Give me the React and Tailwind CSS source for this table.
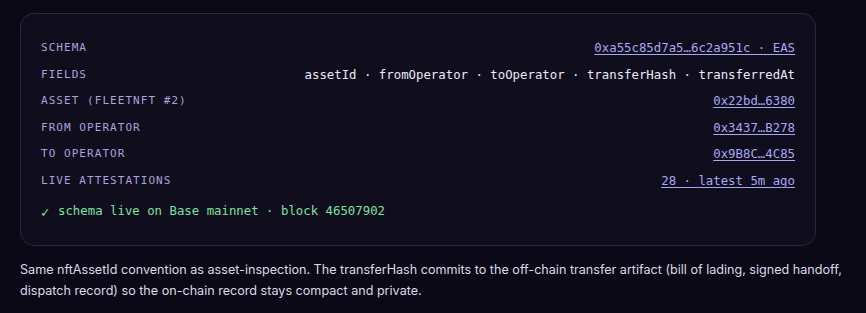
import React from "react";

const rows = [
  { label: "SCHEMA", value: "0xa55c85d7a5…6c2a951c · EAS", link: true },
  {
    label: "FIELDS",
    value: "assetId · fromOperator · toOperator · transferHash · transferredAt",
  },
  { label: "ASSET (FLEETNFT #2)", value: "0x22bd…6380", link: true },
  { label: "FROM OPERATOR", value: "0x3437…B278", link: true },
  { label: "TO OPERATOR", value: "0x9B8C…4C85", link: true },
  { label: "LIVE ATTESTATIONS", value: "28 · latest 5m ago", link: true },
];

const SchemaRow = ({ label, value, link }) => (
  <div className="flex items-center justify-between h-[26.6px] font-['DejaVu_Sans_Mono','Liberation_Mono',monospace]">
    <span className="text-[11px] tracking-[1.05px] text-[#aba3dc]">{label}</span>
    {link ? (
      <a className="text-[12.35px] text-[#a7a8f5] underline underline-offset-2">{value}</a>
    ) : (
      <span className="text-[12.35px] text-[#eceaf5]">{value}</span>
    )}
  </div>
);

export default function App() {
  return (
    <div className="w-[866px] h-[313px] bg-[#0b0915] px-5 pt-[13px]">
      <div className="w-[796px] rounded-[14px] border border-[#2a2740] bg-[#100d1c] px-5 pt-[21px] pb-[20px]">
        {rows.map((r) => (
          <SchemaRow key={r.label} {...r} />
        ))}
        <div className="mt-[4px] h-[26px] flex items-center text-[12.35px] text-[#7ee2a0] font-['DejaVu_Sans_Mono','Liberation_Mono',monospace]">
          <span className="inline-block w-[17px] text-[14px] leading-none">✓</span>
          <span>schema live on Base mainnet · block 46507902</span>
        </div>
      </div>
      <p className="mt-[13px] text-[12.6px] leading-[21px] text-[#dcdae6] font-['Inter','Noto_Sans',sans-serif]">
        Same nftAssetId convention as asset-inspection. The transferHash commits to the off-chain
        transfer artifact (bill of lading, signed handoff, dispatch record) so the on-chain record
        stays compact and private.
      </p>
    </div>
  );
}
